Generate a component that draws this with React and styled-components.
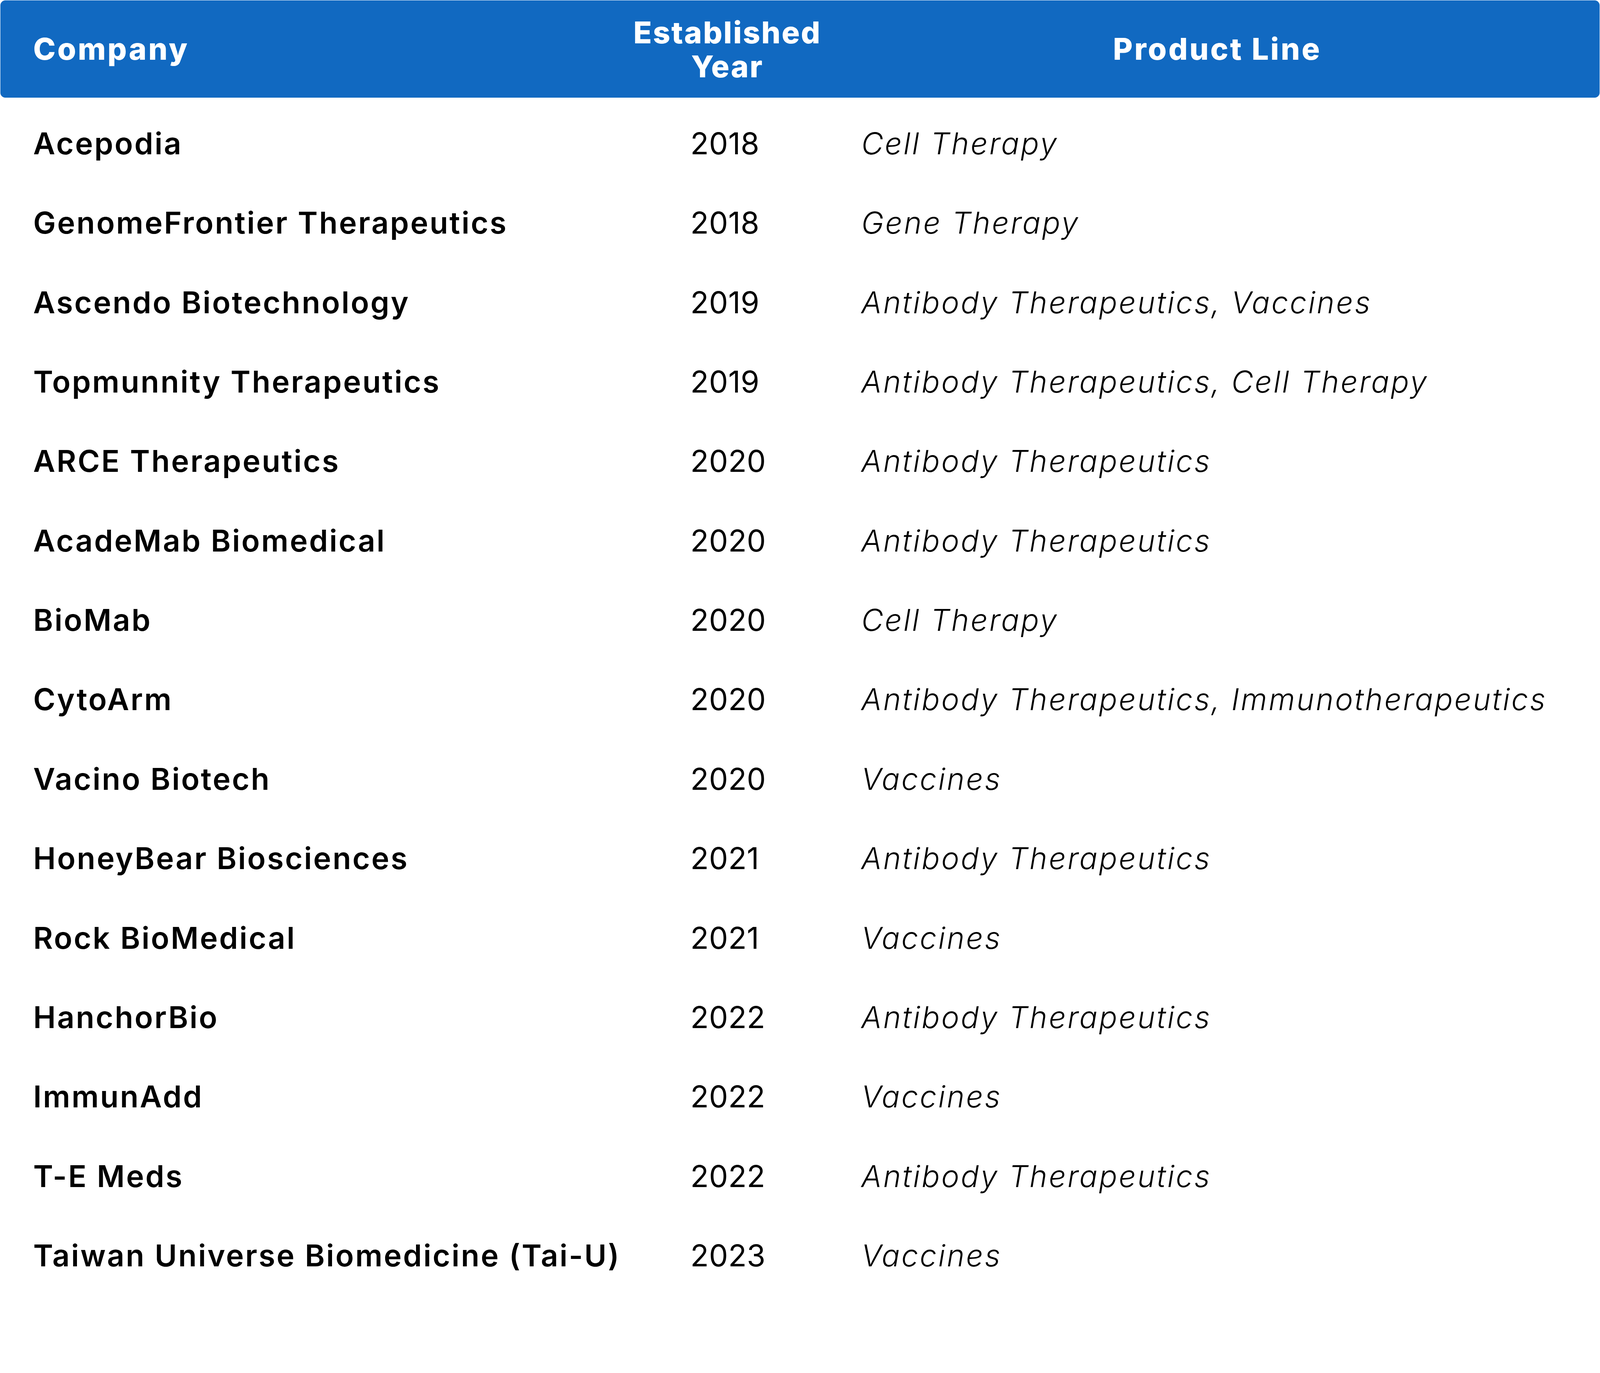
import React from "react";
import styled, { createGlobalStyle } from "styled-components";

// sizes are taken from a 4239px wide design and scaled to the viewport
const u = n => `calc(${n} * 100vw / 4239)`;

const GlobalStyle = createGlobalStyle`
  html, body {
    margin: 0;
    background: #ffffff;
    overflow: hidden;
  }
  body {
    font-family: "Inter", "Noto Sans", sans-serif;
    color: #000000;
  }
`;

const companies = [
  { name: "Acepodia", year: 2018, products: "Cell Therapy" },
  { name: "GenomeFrontier Therapeutics", year: 2018, products: "Gene Therapy" },
  { name: "Ascendo Biotechnology", year: 2019, products: "Antibody Therapeutics, Vaccines" },
  { name: "Topmunnity Therapeutics", year: 2019, products: "Antibody Therapeutics, Cell Therapy" },
  { name: "ARCE Therapeutics", year: 2020, products: "Antibody Therapeutics" },
  { name: "AcadeMab Biomedical", year: 2020, products: "Antibody Therapeutics" },
  { name: "BioMab", year: 2020, products: "Cell Therapy" },
  { name: "CytoArm", year: 2020, products: "Antibody Therapeutics, Immunotherapeutics" },
  { name: "Vacino Biotech", year: 2020, products: "Vaccines" },
  { name: "HoneyBear Biosciences", year: 2021, products: "Antibody Therapeutics" },
  { name: "Rock BioMedical", year: 2021, products: "Vaccines" },
  { name: "HanchorBio", year: 2022, products: "Antibody Therapeutics" },
  { name: "ImmunAdd", year: 2022, products: "Vaccines" },
  { name: "T-E Meds", year: 2022, products: "Antibody Therapeutics" },
  { name: "Taiwan Universe Biomedicine (Tai-U)", year: 2023, products: "Vaccines" },
];

const columns = `${u(1797)} ${u(452)} 1fr`;

const Page = styled.div`
  padding: ${u(1)} ${u(1)} ${u(82)};
`;

const HeaderRow = styled.div`
  display: grid;
  grid-template-columns: ${columns};
  height: ${u(258)};
  background: #1169c1;
  border-radius: ${u(13)};
  color: #ffffff;
  font-size: ${u(80)};
  font-weight: 800;
  line-height: ${u(90)};
`;

const HeadCell = styled.div`
  display: flex;
  flex-direction: column;
  justify-content: center;
  align-items: ${props => (props.$center ? "center" : "flex-start")};
  padding: ${props => props.$pad || "0"};
  letter-spacing: ${props => u(props.$spacing || 4.6)};
  white-space: nowrap;
  text-align: center;
`;

const Body = styled.div`
  padding-top: ${u(16)};
`;

const Row = styled.div`
  display: grid;
  grid-template-columns: ${columns};
  align-items: center;
  height: ${u(210.5)};
  font-size: ${u(80)};
  line-height: 1;
  white-space: nowrap;
`;

const Name = styled.div`
  padding-left: ${u(87)};
  font-weight: 600;
  letter-spacing: ${u(3.7)};
`;

const Year = styled.div`
  padding-left: ${u(31)};
  font-weight: 400;
  letter-spacing: ${u(0.5)};
`;

const Product = styled.div`
  padding-left: ${u(32)};
  font-weight: 300;
  font-style: italic;
  letter-spacing: ${u(4)};
`;

export default function App() {
  return (
    <>
      <GlobalStyle />
      <Page>
        <HeaderRow>
          <HeadCell $pad={`0 0 0 ${u(87)}`}>Company</HeadCell>
          <HeadCell $center $spacing={3} $pad={`${u(3)} ${u(194)} 0 0`}>
            <span>
              Established
              <br />
              Year
            </span>
          </HeadCell>
          <HeadCell $center $pad={`0 ${u(38)} 0 0`}>Product Line</HeadCell>
        </HeaderRow>
        <Body>
          {companies.map(c => (
            <Row key={c.name}>
              <Name>{c.name}</Name>
              <Year>{c.year}</Year>
              <Product>{c.products}</Product>
            </Row>
          ))}
        </Body>
      </Page>
    </>
  );
}
